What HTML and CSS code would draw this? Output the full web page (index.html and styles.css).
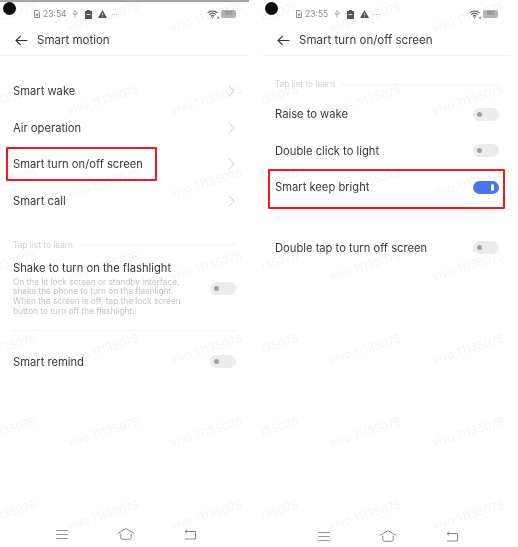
FILE: index.html
```html
<!DOCTYPE html>
<html lang="en">
<head>
<meta charset="utf-8">
<title>Smart motion</title>
<link rel="stylesheet" href="styles.css">
</head>
<body>
<svg class="defs" width="0" height="0" aria-hidden="true">
  <defs>
    <symbol id="chev" viewBox="0 0 7 12"><path d="M1 .8 6 6 1 11.2" fill="none" stroke="#c9c9c9" stroke-width="1"/></symbol>
    <symbol id="back" viewBox="0 0 13 11"><path d="M12.5 5.5H1M5.8 .8 1 5.5l4.8 4.7" fill="none" stroke="#333" stroke-width="1.1"/></symbol>
    <symbol id="doc" viewBox="0 0 6 8"><path d="M.5.5h3.4l1.6 1.6v5.4h-5z" fill="none" stroke="#777" stroke-width=".8"/><path d="M1.8 3.6h2.4v2H1.8z" fill="#888"/></symbol>
    <symbol id="usb" viewBox="0 0 6 8"><path d="M3 0 1.9 1.5h2.2zM2.7 1.5h.6V8h-.6zM.6 2.4h1v1.2l1.4 1v.7L.9 4.1V2.4zM4.4 2.2h1.1v1.6L3 5.5v-.7l1.7-1.1V3.200H4.400z" fill="#888"/></symbol>
    <symbol id="batt" viewBox="0 0 7 9"><path d="M2 0h3v1h2v8H0V1h2z" fill="#555"/><path d="M1.500 4h4v1h-4z" fill="#ddd"/></symbol>
    <symbol id="warn" viewBox="0 0 9 8"><path d="M4.500 0 9 8H0z" fill="#555"/><path d="M4.100 3h.8v2.500h-.8zM4.100 6h.8v.8h-.8z" fill="#ddd"/></symbol>
    <symbol id="wifi" viewBox="0 0 12 9"><path d="M.6 2.800a7.600 7.600 0 0 1 9.800 0M2.200 4.600a5.200 5.200 0 0 1 6.600 0M3.800 6.300a2.700 2.700 0 0 1 3.400 0" fill="none" stroke="#555" stroke-width="1.100"/><path d="M5.500 8.800 4.500 7.500h2zM10.500 6.800h1.200V8.800h-1.200z" fill="#555"/></symbol>
    <symbol id="menu" viewBox="0 0 12 9"><path d="M0 .5h12M0 4.500h12M0 8.500h12" stroke="#999" stroke-width="1"/></symbol>
    <symbol id="home" viewBox="0 0 18 12"><path d="M.6 5.600 9 .6l8.400 5M3.800 5.600v4.200a1.500 1.500 0 0 0 1.500 1.500h7.400a1.500 1.500 0 0 0 1.500-1.500V5.600" fill="none" stroke="#888" stroke-width="1"/></symbol>
    <symbol id="ret" viewBox="0 0 13 11"><path d="M1 2.500h10.500v7.500H1M3.200.6 1 2.500l2.200 1.900" fill="none" stroke="#888" stroke-width="1"/></symbol>
  </defs>
</svg>
<main class="screens">

  <section class="phone phone-a">
    <div class="topline"></div>
    <div class="status">
      <span class="cam"></span>
      <svg class="ic-doc"><use href="#doc"/></svg>
      <span class="time">23:54</span>
      <svg class="ic-usb"><use href="#usb"/></svg>
      <svg class="ic-batt"><use href="#batt"/></svg>
      <svg class="ic-warn"><use href="#warn"/></svg>
      <span class="dots">···</span>
      <span class="status-right">
        <svg class="ic-wifi"><use href="#wifi"/></svg>
        <span class="pill">100</span>
      </span>
    </div>
    <header class="head">
      <svg class="ic-back"><use href="#back"/></svg>
      <h1 class="title">Smart motion</h1>
    </header>
    <div class="list list-a">
      <div class="row"><span>Smart wake</span><svg class="ic-chev"><use href="#chev"/></svg></div>
      <div class="row"><span>Air operation</span><svg class="ic-chev"><use href="#chev"/></svg></div>
      <div class="row hl hl-a"><span>Smart turn on/off screen</span><svg class="ic-chev"><use href="#chev"/></svg></div>
      <div class="row"><span>Smart call</span><svg class="ic-chev"><use href="#chev"/></svg></div>
    </div>
    <div class="label label-a"><span>Tap list to learn</span></div>
    <div class="block">
      <div class="block-text">
        <div class="block-title">Shake to turn on the flashlight</div>
        <p class="desc">On the lit lock screen or standby interface, shake the phone to turn on the flashlight. When the screen is off, tap the lock screen button to turn off the flashlight.</p>
      </div>
      <span class="toggle"></span>
    </div>
    <div class="row row-remind"><span>Smart remind</span><span class="toggle"></span></div>
    <nav class="nav">
      <svg class="ic-menu"><use href="#menu"/></svg>
      <svg class="ic-home"><use href="#home"/></svg>
      <svg class="ic-ret"><use href="#ret"/></svg>
    </nav>
    <div class="marks"><span>vivo 11135075</span><span>vivo 11135075</span><span>vivo 11135075</span><span>vivo 11135075</span><span>vivo 11135075</span><span>vivo 11135075</span><span>vivo 11135075</span><span>vivo 11135075</span><span>vivo 11135075</span><span>vivo 11135075</span><span>vivo 11135075</span><span>vivo 11135075</span><span>vivo 11135075</span><span>vivo 11135075</span><span>vivo 11135075</span><span>vivo 11135075</span><span>vivo 11135075</span><span>vivo 11135075</span><span>vivo 11135075</span><span>vivo 11135075</span><span>vivo 11135075</span></div>
  </section>

  <section class="phone phone-b">
    <div class="status">
      <span class="cam"></span>
      <svg class="ic-doc"><use href="#doc"/></svg>
      <span class="time">23:55</span>
      <svg class="ic-usb"><use href="#usb"/></svg>
      <svg class="ic-batt"><use href="#batt"/></svg>
      <svg class="ic-warn"><use href="#warn"/></svg>
      <span class="dots">···</span>
      <span class="status-right">
        <svg class="ic-wifi"><use href="#wifi"/></svg>
        <span class="pill">100</span>
      </span>
    </div>
    <header class="head">
      <svg class="ic-back"><use href="#back"/></svg>
      <h1 class="title">Smart turn on/off screen</h1>
    </header>
    <div class="label label-b"><span>Tap list to learn</span></div>
    <div class="list list-b">
      <div class="row"><span>Raise to wake</span><span class="toggle"></span></div>
      <div class="row"><span>Double click to light</span><span class="toggle"></span></div>
      <div class="row hl hl-b"><span>Smart keep bright</span><span class="toggle on"></span></div>
    </div>
    <div class="rule"></div>
    <div class="row"><span>Double tap to turn off screen</span><span class="toggle"></span></div>
    <nav class="nav">
      <svg class="ic-menu"><use href="#menu"/></svg>
      <svg class="ic-home"><use href="#home"/></svg>
      <svg class="ic-ret"><use href="#ret"/></svg>
    </nav>
    <div class="marks"><span>vivo 11135075</span><span>vivo 11135075</span><span>vivo 11135075</span><span>vivo 11135075</span><span>vivo 11135075</span><span>vivo 11135075</span><span>vivo 11135075</span><span>vivo 11135075</span><span>vivo 11135075</span><span>vivo 11135075</span><span>vivo 11135075</span><span>vivo 11135075</span><span>vivo 11135075</span><span>vivo 11135075</span><span>vivo 11135075</span><span>vivo 11135075</span><span>vivo 11135075</span><span>vivo 11135075</span><span>vivo 11135075</span><span>vivo 11135075</span><span>vivo 11135075</span></div>
  </section>

</main>
</body>
</html>
```

FILE: styles.css
```css
*, *::before, *::after { box-sizing: border-box; }
html, body { margin: 0; padding: 0; background: #fff; overflow: hidden; }
body { width: 518px; height: 547px; font-family: Inter, "Liberation Sans", sans-serif; color: #3a3a3a; }
.defs { position: absolute; }
svg { display: block; flex: none; }

.screens { display: flex; gap: 13px; height: 547px; filter: blur(.4px); }
.phone { position: relative; isolation: isolate; overflow: hidden; width: 249px; height: 547px; display: flex; flex-direction: column; }
.topline { position: absolute; top: 0; left: 0; right: 0; height: 2px; background: #a5a5a5; }

.status { height: 28px; display: flex; align-items: center; padding: 0 13px 0 34px; position: relative; font-size: 8.5px; color: #8a8a8a; }
.cam { position: absolute; left: 3px; top: 2px; width: 13px; height: 13px; border-radius: 50%; background: #0b0b0b; }
.ic-doc { width: 6px; height: 8px; margin-right: 3px; }
.time { width: 25px; }
.ic-usb { width: 6px; height: 8px; margin-left: 4px; }
.ic-batt { width: 7px; height: 9px; margin-left: 7px; }
.ic-warn { width: 9px; height: 8px; margin-left: 6px; }
.dots { margin-left: 4px; font-size: 8px; }
.status-right { margin-left: auto; display: flex; align-items: center; gap: 2px; }
.ic-wifi { width: 12px; height: 9px; }
.pill { width: 15px; height: 8px; border-radius: 2px; background: #b4b4b4; color: #666; font-size: 4.500px; line-height: 8px; text-align: center; }

.head { height: 28px; display: flex; align-items: center; padding: 0 0 3px 15px; gap: 9px; border-bottom: 1px solid #f3f3f3; }
.ic-back { width: 13px; height: 11px; }
.title { margin: 0; font-size: 11.5px; font-weight: 400; color: #3a3a3a; }

.list-a { padding-top: 17px; }
.list-b { margin-top: 5px; }
.row { height: 36.500px; display: flex; align-items: center; justify-content: space-between; padding: 0 13px; font-size: 11.200px; color: #3a3a3a; position: relative; }
.phone-b .row { padding-right: 12px; }
.ic-chev { width: 7px; height: 12px; margin-right: 1px; }

.label { height: 14px; margin: 0 13px; display: flex; align-items: center; gap: 6px; font-size: 8.300px; color: #cfcfcf; }
.label::after { content: ""; flex: 1; height: 1px; background: #f3f3f3; }
.label-a { margin-top: 18.500px; }
.label-b { margin-top: 21px; }

.block { margin: 9px 13px 0; padding-bottom: 14px; border-bottom: 1px solid #f3f3f3; display: flex; align-items: center; justify-content: space-between; }
.block-text { width: 172px; }
.block-title { font-size: 11.200px; line-height: 15px; color: #3a3a3a; white-space: nowrap; }
.desc { margin: 2px 0 0; font-size: 8.300px; line-height: 9.700px; color: #c4c4c4; }
.row-remind { margin-top: 12px; }

.rule { height: 1px; margin: 11px 13px 12px; background: #f3f3f3; }

.toggle { width: 26px; height: 13px; border-radius: 7px; background: #ececec; position: relative; flex: none; }
.toggle::after { content: ""; position: absolute; left: 4px; top: 4px; width: 5px; height: 5px; border-radius: 50%; background: #9e9e9e; }
.toggle.on { background: #4a74ee; }
.toggle.on::after { left: auto; right: 5px; top: 3px; width: 3px; height: 7px; border-radius: 1.500px; background: #fff; }

.hl::before { content: ""; position: absolute; border: 2px solid #f21b1b; border-radius: 1px; pointer-events: none; }
.hl-a::before { left: 6px; width: 151px; top: 1px; height: 34px; }
.hl-b::before { left: 6px; width: 237px; top: 0; height: 40px; }

.nav { margin-top: auto; height: 12px; margin-bottom: 7px; display: flex; align-items: center; justify-content: space-between; padding: 0 52px 0 56px; }
.phone-b .nav { margin-bottom: 5px; }
.ic-menu { width: 12px; height: 9px; }
.ic-home { width: 18px; height: 12px; }
.ic-ret { width: 13px; height: 11px; }

.marks { position: absolute; z-index: -1; left: -51px; top: 10px; width: 309px; height: 537px; display: grid; grid-template-columns: repeat(3, 103px); grid-auto-rows: 83px; pointer-events: none; }
.marks span { transform: rotate(-17deg); font-size: 11.500px; color: #f5f5f5; white-space: nowrap; justify-self: center; height: 14px; }
```
